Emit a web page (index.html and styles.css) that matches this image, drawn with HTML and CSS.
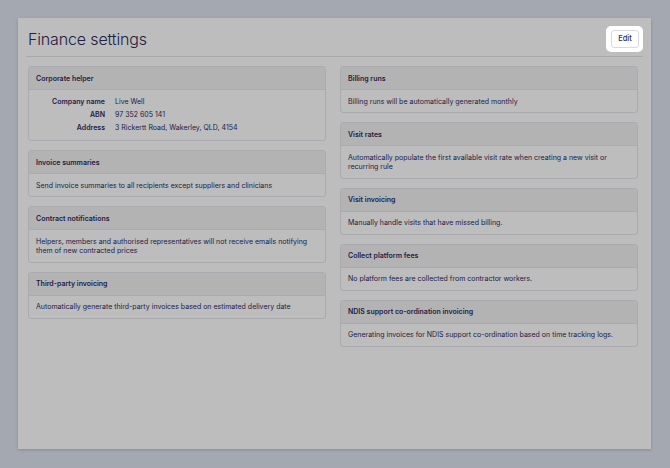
FILE: index.html
```html
<!DOCTYPE html>
<html lang="en">
<head>
<meta charset="utf-8">
<title>Finance settings</title>
<link rel="stylesheet" href="styles.css">
</head>
<body>
<div class="panel">
  <div class="panel-head">
    <h1 class="title">Finance settings</h1>
    <span class="spotlight"><button class="btn">Edit</button></span>
  </div>
  <div class="columns">
    <div class="col">
      <section class="card">
        <div class="card-head">Corporate helper</div>
        <dl class="details">
          <dt>Company name</dt><dd>Live Well</dd>
          <dt>ABN</dt><dd>97 352 605 141</dd>
          <dt>Address</dt><dd>3 Rickertt Road, Wakerley, QLD, 4154</dd>
        </dl>
      </section>
      <section class="card">
        <div class="card-head">Invoice summaries</div>
        <p class="card-body">Send invoice summaries to all recipients except suppliers and clinicians</p>
      </section>
      <section class="card">
        <div class="card-head">Contract notifications</div>
        <p class="card-body">Helpers, members and authorised representatives will not receive emails notifying them of new contracted prices</p>
      </section>
      <section class="card">
        <div class="card-head">Third-party invoicing</div>
        <p class="card-body">Automatically generate third-party invoices based on estimated delivery date</p>
      </section>
    </div>
    <div class="col">
      <section class="card">
        <div class="card-head">Billing runs</div>
        <p class="card-body">Billing runs will be automatically generated monthly</p>
      </section>
      <section class="card">
        <div class="card-head">Visit rates</div>
        <p class="card-body">Automatically populate the first available visit rate when creating a new visit or recurring rule</p>
      </section>
      <section class="card">
        <div class="card-head">Visit invoicing</div>
        <p class="card-body">Manually handle visits that have missed billing.</p>
      </section>
      <section class="card">
        <div class="card-head">Collect platform fees</div>
        <p class="card-body">No platform fees are collected from contractor workers.</p>
      </section>
      <section class="card">
        <div class="card-head">NDIS support co-ordination invoicing</div>
        <p class="card-body">Generating invoices for NDIS support co-ordination based on time tracking logs.</p>
      </section>
    </div>
  </div>
</div>
</body>
</html>
```

FILE: styles.css
```css
* { box-sizing: border-box; }
html, body { height: 100%; }
body {
  margin: 0;
  padding: 18px 19px 19px 18px;
  background: #dee3ef;
  font-family: Inter, "Noto Sans", sans-serif;
  color: #2e2b5e;
  overflow: hidden;
}
.panel {
  height: 431px;
  background: #ffffff;
  box-shadow: 0 1px 3px rgba(0, 0, 0, 0.18);
  padding: 0 13px 0 10px;
}
.panel-head {
  display: flex;
  align-items: center;
  justify-content: space-between;
  height: 39px;
  margin: 0 -5px 0 -2px;
  padding: 0 4px 0 2px;
  border-bottom: 1px solid #e3e3ea;
}
.title {
  margin: 0;
  font-size: 16px;
  font-weight: 300;
  letter-spacing: -0.15px;
  color: #2e2b5e;
  padding-top: 4px;
}
.spotlight {
  position: relative;
  z-index: 2;
  display: inline-flex;
  padding: 4px 4px 4px 5px;
  background: #ffffff;
  border-radius: 5px;
  box-shadow: 0 0 0 3000px rgba(0, 0, 0, 0.26);
  margin-right: -4px;
  margin-top: 3px;
}
.btn {
  width: 28px;
  height: 18px;
  padding: 0;
  border: 1px solid #d9d9e6;
  border-radius: 3px;
  background: #ffffff;
  font-family: inherit;
  font-size: 7.5px;
  font-weight: 500;
  color: #2e2b5e;
}
.columns {
  display: grid;
  grid-template-columns: 298px 298px;
  column-gap: 14px;
  padding-top: 9px;
}
.col {
  display: flex;
  flex-direction: column;
  gap: 9px;
}
.card {
  border: 1px solid #e6e6ec;
  border-radius: 3px;
  overflow: hidden;
  background: #ffffff;
}
.card-head {
  height: 23px;
  display: flex;
  align-items: center;
  padding: 0 7px;
  background: #f2f2f3;
  border-bottom: 1px solid #e6e6ec;
  font-size: 7px;
  font-weight: 600;
}
.card-body {
  margin: 0;
  padding: 6.5px 7px 6px;
  font-size: 7px;
  line-height: 9.5px;
}
.details {
  margin: 0;
  padding: 5px 7px 6px;
  display: grid;
  grid-template-columns: 69px auto;
  column-gap: 10px;
  font-size: 7px;
  line-height: 13px;
}
.details dt {
  text-align: right;
  font-weight: 600;
}
.details dd { margin: 0; }
```
